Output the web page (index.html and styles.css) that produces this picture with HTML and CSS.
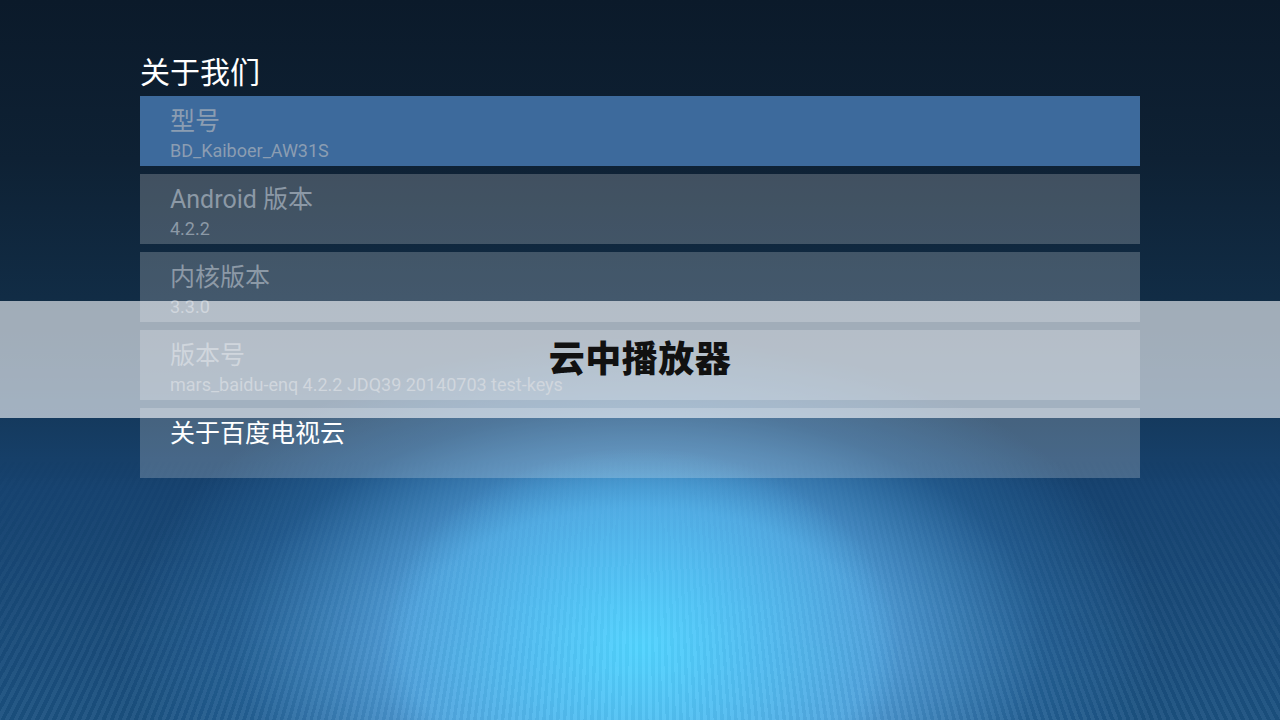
FILE: index.html
```html
<!DOCTYPE html>
<html lang="zh">
<head>
<meta charset="utf-8">
<title>关于我们</title>
<link rel="stylesheet" href="styles.css">
</head>
<body>
<div class="screen">
  <main class="panel">
    <h1 class="title">关于我们</h1>
    <ul class="list">
      <li class="item selected">
        <div class="item-title">型号</div>
        <div class="item-sub">BD_Kaiboer_AW31S</div>
      </li>
      <li class="item">
        <div class="item-title">Android 版本</div>
        <div class="item-sub">4.2.2</div>
      </li>
      <li class="item">
        <div class="item-title">内核版本</div>
        <div class="item-sub">3.3.0</div>
      </li>
      <li class="item">
        <div class="item-title">版本号</div>
        <div class="item-sub">mars_baidu-enq 4.2.2 JDQ39 20140703 test-keys</div>
      </li>
      <li class="item">
        <div class="item-title bright">关于百度电视云</div>
      </li>
    </ul>
  </main>
  <div class="toast"><span class="toast-text">云中播放器</span></div>
</div>
</body>
</html>
```
FILE: styles.css
```css
html, body {
  margin: 0;
  padding: 0;
}
body {
  width: 1280px;
  height: 720px;
  overflow: hidden;
  font-family: Roboto, "Noto Sans CJK SC", sans-serif;
}
.screen {
  position: relative;
  width: 1280px;
  height: 720px;
  background:
    radial-gradient(ellipse 260px 200px at 50% 90%, rgba(82,212,255,1) 0%, rgba(82,200,250,0.7) 45%, rgba(82,180,240,0) 100%),
    radial-gradient(ellipse 520px 310px at 50% 90%, rgba(88,170,228,1) 0%, rgba(86,166,226,0.9) 45%, rgba(50,120,180,0.4) 78%, rgba(40,100,160,0) 100%),
    linear-gradient(180deg, #0b1a2a 0%, #0e2134 22%, #12304b 48%, #174370 68%, #1b5180 100%);
  display: flex;
  flex-direction: column;
}
.screen::before {
  content: "";
  position: absolute;
  inset: 0;
  background: repeating-conic-gradient(from 150deg at 50% -70%, rgba(255,255,255,0.05) 0deg 0.16deg, rgba(0,0,0,0.035) 0.16deg 0.32deg);
  -webkit-mask-image: linear-gradient(180deg, transparent 0%, transparent 62%, #000 100%);
  mask-image: linear-gradient(180deg, transparent 0%, transparent 62%, #000 100%);
  pointer-events: none;
}
.panel {
  position: relative;
  padding: 49px 140px 0 140px;
}
.title {
  margin: 0;
  height: 47px;
  font-family: "Noto Sans CJK SC", sans-serif;
  font-weight: 400;
  font-size: 30px;
  line-height: 42px;
  color: #ffffff;
}
.list {
  list-style: none;
  margin: 0;
  padding: 0;
  display: flex;
  flex-direction: column;
  gap: 8px;
}
.item {
  height: 70px;
  box-sizing: border-box;
  padding: 9px 30px 0 30px;
  background: rgba(255,255,255,0.21);
}
.item.selected {
  background: #3d6a9c;
}
.item-title {
  font-family: Roboto, "Noto Sans CJK SC", sans-serif;
  font-size: 25px;
  line-height: 34px;
  color: #8c99a6;
}
.item.selected .item-title,
.item.selected .item-sub {
  color: #8b9db2;
}
.item-title.bright {
  color: #ffffff;
}
.item-sub {
  margin-top: 0;
  font-family: Roboto, sans-serif;
  font-size: 18px;
  line-height: 24px;
  color: #8c99a6;
}
.toast {
  position: absolute;
  left: 0;
  top: 301px;
  width: 1280px;
  height: 117px;
  background: rgba(250,252,255,0.62);
  display: flex;
  align-items: center;
  justify-content: center;
}
.toast-text {
  font-family: "Noto Sans CJK SC", sans-serif;
  font-weight: 900;
  font-size: 36px;
  line-height: 40px;
  color: #111111;
  margin-top: -7px;
  letter-spacing: 0.5px;
}
```
